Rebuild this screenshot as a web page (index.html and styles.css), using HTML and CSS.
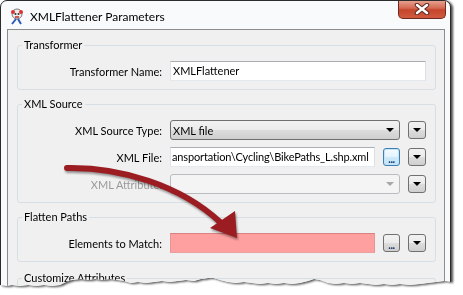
FILE: index.html
```html
<!DOCTYPE html>
<html lang="en">
<head>
  <meta charset="UTF-8">
  <title>XMLFlattener Parameters</title>
  <link rel="stylesheet" href="styles.css">
</head>
<body>
  <div class="shot">
    <div class="window">
      <div class="titlebar">
        <svg class="app-icon" width="17" height="17" viewBox="0 0 17 17">
          <circle cx="8" cy="6" r="5" fill="#ececec" stroke="#7a7a7a"/>
          <circle cx="4" cy="4" r="2" fill="#d33"/>
          <circle cx="12" cy="4" r="2" fill="#d33"/>
          <circle cx="6.5" cy="6" r="1" fill="#333"/>
          <circle cx="9.5" cy="6" r="1" fill="#333"/>
          <path d="M7 11 L3 16 M9 11 L12 16" stroke="#2a5bb8" stroke-width="2"/>
          <path d="M6 9 L10 9" stroke="#c22" stroke-width="1.5"/>
        </svg>
        <span class="title">XMLFlattener Parameters</span>
        <div class="close">
          <svg width="16" height="12" viewBox="0 0 16 12">
            <path d="M3 2 L13 10 M13 2 L3 10" stroke="#5b2b22" stroke-width="4.5" stroke-linecap="round"/>
            <path d="M3 2 L13 10 M13 2 L3 10" stroke="#fff" stroke-width="2.5" stroke-linecap="round"/>
          </svg>
        </div>
      </div>

      <div class="client">
        <fieldset class="group">
          <legend>Transformer</legend>
          <div class="row">
            <label>Transformer Name:</label>
            <div class="edit">XMLFlattener</div>
          </div>
        </fieldset>

        <fieldset class="group">
          <legend>XML Source</legend>
          <div class="row">
            <label>XML Source Type:</label>
            <div class="combo"><span>XML file</span><i class="caret"></i></div>
            <div class="btn drop"><i class="caret"></i></div>
          </div>
          <div class="row">
            <label>XML File:</label>
            <div class="edit path">ansportation\Cycling\BikePaths_L.shp.xml</div>
            <div class="btn dots focus">...</div>
            <div class="btn drop"><i class="caret"></i></div>
          </div>
          <div class="row">
            <label class="disabled">XML Attribute:</label>
            <div class="combo disabled"><span></span><i class="caret"></i></div>
            <div class="btn drop"><i class="caret"></i></div>
          </div>
        </fieldset>

        <fieldset class="group">
          <legend>Flatten Paths</legend>
          <div class="row">
            <label>Elements to Match:</label>
            <div class="edit required"></div>
            <div class="btn dots">...</div>
            <div class="btn drop"><i class="caret"></i></div>
          </div>
        </fieldset>

        <fieldset class="group">
          <legend>Customize Attributes</legend>
          <div class="row"></div>
        </fieldset>
      </div>
    </div>
  </div>

  <svg class="arrow" width="463" height="295" viewBox="0 0 463 295">
    <path d="M67 168 C120 167 180 185 220 222" fill="none" stroke="#9b1c21" stroke-width="6" stroke-linecap="round"/>
    <path d="M210 228 L235 211 L237 238 Z" fill="#9b1c21"/>
  </svg>
</body>
</html>
```
FILE: styles.css
```css
body {
  margin: 0;
  background: #fff;
  font-family: Lato, "Liberation Sans", sans-serif;
  font-size: 11px;
  color: #000;
}
.shot {
  width: 463px;
  height: 295px;
  filter: drop-shadow(2px 1px 1px rgba(0, 0, 0, 0.7));
}
.window {
  width: 451px;
  height: 292px;
  box-sizing: border-box;
  border: 1px solid #2c2c2c;
  border-radius: 7px 7px 0 0;
  background: #f9fafb;
  overflow: hidden;
  clip-path: polygon(0 0, 100% 0, 100% 282px, 444px 281px, 436px 282px, 428px 283px, 420px 284px, 410px 285px, 400px 284px, 392px 285px, 384px 284px, 376px 285px, 368px 284px, 360px 283px, 352px 284px, 344px 283px, 336px 284px, 328px 283px, 320px 280px, 314px 279px, 308px 281px, 300px 283px, 292px 284px, 284px 283px, 276px 284px, 268px 283px, 260px 284px, 252px 283px, 244px 282px, 236px 283px, 228px 282px, 220px 280px, 214px 278px, 208px 278px, 201px 279px, 194px 281px, 186px 280px, 178px 281px, 170px 282px, 162px 281px, 154px 282px, 146px 283px, 138px 282px, 131px 283px, 124px 281px, 117px 280px, 110px 279px, 102px 280px, 95px 279px, 88px 280px, 80px 279px, 72px 280px, 66px 282px, 60px 285px, 52px 286px, 44px 285px, 36px 286px, 28px 285px, 20px 286px, 12px 285px, 6px 286px, 0 285px);
}

.titlebar {
  height: 28px;
  display: flex;
  align-items: center;
  padding: 0 4px 0 8px;
}
.app-icon {
  margin-top: 2px;
}
.title {
  margin-left: 4px;
  margin-top: 3px;
  font-size: 12px;
}
.close {
  margin-left: auto;
  align-self: flex-start;
  margin-top: -1px;
  width: 48px;
  height: 19px;
  box-sizing: border-box;
  border: 1px solid #6d2a20;
  border-top: none;
  border-radius: 0 0 5px 5px;
  background: linear-gradient(#e9a797, #d46a52 45%, #c6452c 55%, #cf5a3f);
  display: flex;
  align-items: center;
  justify-content: center;
}

.client {
  margin: 0 5px 0 6px;
  height: 270px;
  border: 1px solid #8a8c8e;
  border-bottom: none;
  background: #f0f0f0;
  padding: 0 8px 0 9px;
  overflow: hidden;
}
.group {
  margin: 7px 0 0;
  padding: 9px 9px 8px 0;
  border: 1px solid #d5dfe5;
  border-radius: 3px;
  min-width: 0;
}
.group:first-child {
  margin-top: 8px;
}
.group:last-child {
  margin-top: 9px;
}
.group legend {
  margin-left: 4px;
  padding: 0 2px;
  line-height: 14px;
}

.row {
  display: flex;
  align-items: center;
  gap: 8px;
  height: 20px;
}
.row + .row {
  margin-top: 7px;
}
.row label {
  flex: none;
  width: 144px;
  text-align: right;
}
label.disabled {
  color: #9a9a9a;
}

.edit {
  flex: 1;
  min-width: 0;
  height: 20px;
  box-sizing: border-box;
  border: 1px solid;
  border-color: #abadb3 #dbdfe6 #e3e9ef #e2e3ea;
  background: #fff;
  padding: 0 2px;
  line-height: 18px;
  white-space: nowrap;
  overflow: hidden;
}
.edit.path {
  padding-left: 1px;
  letter-spacing: -0.15px;
}
.edit.required {
  background: #ffa0a0;
  border-color: #d98080 #e69494 #eda0a0 #e69494;
}

.combo {
  flex: 1;
  height: 20px;
  box-sizing: border-box;
  border: 1px solid #707070;
  border-radius: 3px;
  background: linear-gradient(#f2f2f2, #ebebeb 50%, #dddddd 50%, #cfcfcf);
  padding: 0 5px 0 2px;
  display: flex;
  align-items: center;
  justify-content: space-between;
}
.combo.disabled {
  border-color: #b8bcbf;
  background: #f4f4f4;
}
.combo.disabled .caret {
  border-top-color: #a8a8a8;
}

.caret {
  width: 0;
  height: 0;
  border-left: 4px solid transparent;
  border-right: 4px solid transparent;
  border-top: 4px solid #000;
}

.btn {
  flex: none;
  height: 18px;
  box-sizing: border-box;
  border: 1px solid #707070;
  border-radius: 3px;
  background: linear-gradient(#f2f2f2, #ebebeb 50%, #dddddd 50%, #cfcfcf);
  display: flex;
  align-items: center;
  justify-content: center;
}
.btn.drop {
  width: 18px;
}
.btn.dots {
  width: 17px;
  align-items: flex-end;
  line-height: 12px;
  font-weight: bold;
  color: #1b3a6a;
  letter-spacing: -0.5px;
}
.btn.focus {
  border-color: #3c7fb1;
  background: linear-gradient(#f4fbff, #e3f4fd 50%, #cfeafb 50%, #bfe2f7);
  box-shadow: inset 0 0 0 1px #c5e4f7;
}

.arrow {
  position: absolute;
  left: 0;
  top: 0;
  pointer-events: none;
  filter: drop-shadow(1px 2px 1px rgba(0, 0, 0, 0.4));
}
```
